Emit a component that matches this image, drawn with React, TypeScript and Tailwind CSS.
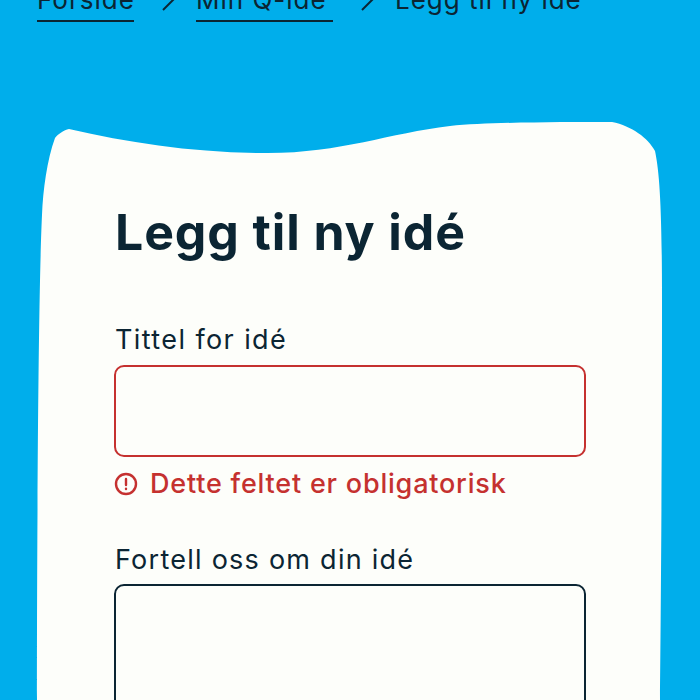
const font = { fontFamily: "Inter, 'Noto Sans', sans-serif" };

function CardShape() {
  return (
    <svg className="absolute left-0 top-0 h-[700px] w-[700px]" viewBox="0 0 700 700" aria-hidden="true">
      <path
        fill="#fdfefa"
        d="M69 129 C130 143 195 153 268 153 C340 153 390 133 450 126 C490 122 560 122 612 122 C632 126 648 138 655 151 C659 170 662 200 662 300 C662 450 661 600 660 700 L37 700 C37 560 38 300 42 215 C43 190 47 160 55 138 C58 134 64 130 69 129 Z"
      />
    </svg>
  );
}

function Chevron({ className }: { className: string }) {
  return (
    <svg className={className} viewBox="0 0 16 22" fill="none" stroke="currentColor" strokeWidth="2">
      <path d="M1 10 L12 -1" />
      <path d="M4 -12 L12 -1" />
    </svg>
  );
}

export default function App() {
  return (
    <div style={font} className="relative h-[700px] w-[700px] overflow-hidden bg-[#00aeeb] text-[#0b2533]">
      <CardShape />
      <div className="relative">
        <nav className="flex h-[22px] items-end text-[26px] leading-none tracking-[1px]">
          <a className="ml-[37px] w-[97px] border-b-2 border-[#0b2533] pb-[7px] whitespace-nowrap">Forside</a>
          <Chevron className="ml-[28px] h-[22px] w-[16px]" />
          <a className="ml-[18px] w-[137px] border-b-2 border-[#0b2533] pb-[7px] whitespace-nowrap">Min Q-idé</a>
          <Chevron className="ml-[28px] h-[22px] w-[16px]" />
          <span className="ml-[18px] pb-[9px] whitespace-nowrap">Legg til ny idé</span>
        </nav>

        <main className="pl-[114px] pr-[114px] pt-[180px]">
          <h1 className="ml-px text-[50px] leading-[60px] font-bold tracking-[0.9px]">Legg til ny idé</h1>

          <label className="ml-px mt-[60px] block text-[27px] leading-[36px] tracking-[1.4px]">Tittel for idé</label>
          <div className="mt-[7px] h-[92px] rounded-[10px] border-2 border-[#c5312f]" />
          <p className="mt-[9px] flex items-center gap-[12px] text-[27px] leading-[36px] font-medium tracking-[0.8px] text-[#c5312f]">
            <svg className="h-[24px] w-[24px] shrink-0" viewBox="0 0 24 24" fill="none" stroke="currentColor" strokeWidth="2.4" strokeLinecap="round">
              <circle cx="12" cy="12" r="10" />
              <path d="M12 7v6" />
              <path d="M12 16.8v.2" />
            </svg>
            Dette feltet er obligatorisk
          </p>

          <label className="ml-px mt-[40px] block text-[27px] leading-[36px] tracking-[1.25px]">Fortell oss om din idé</label>
          <div className="mt-[6px] h-[200px] rounded-[10px] border-2 border-[#0b2533]" />
        </main>
      </div>
    </div>
  );
}
